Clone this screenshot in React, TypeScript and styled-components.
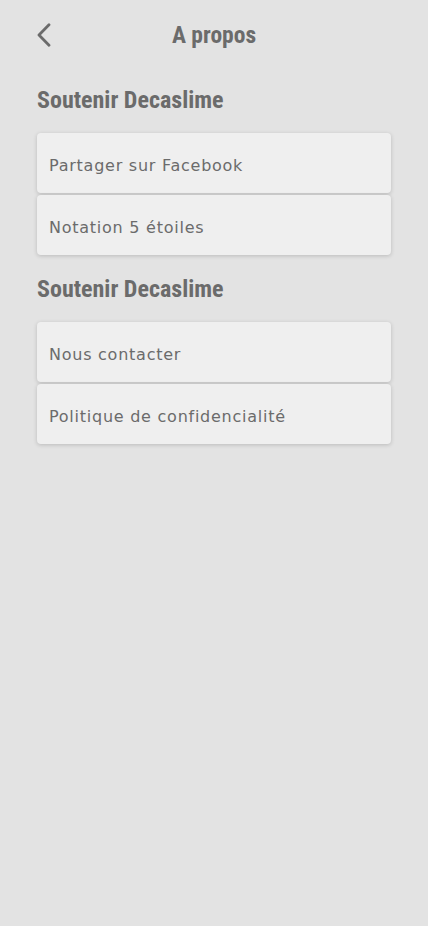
import React from "react";
import styled, { createGlobalStyle } from "styled-components";

const Global = createGlobalStyle`
  html, body { margin: 0; padding: 0; background: #e3e3e3; }
  body { font-family: "DejaVu Sans", "Open Sans", sans-serif; }
  #root { min-height: 926px; }
`;

const Page = styled.div`
  width: 428px;
  min-height: 926px;
  background: #e3e3e3;
  padding: 0 37px;
  box-sizing: border-box;
`;

const Header = styled.header`
  position: relative;
  height: 70px;
  display: flex;
  align-items: center;
  justify-content: center;
`;

const BackButton = styled.button`
  position: absolute;
  left: 0;
  top: 23px;
  width: 14px;
  height: 24px;
  padding: 0;
  border: none;
  background: transparent;
  display: flex;
  cursor: pointer;
`;

const Title = styled.h1`
  margin: 0;
  font-family: "Roboto Condensed", "Roboto", sans-serif;
  font-stretch: condensed;
  font-weight: 700;
  font-size: 23.5px;
  letter-spacing: 0;
  color: #6b6b6b;
`;

const SectionTitle = styled.h2`
  margin: 14px 0 17px;
  font-family: "Roboto Condensed", "Roboto", sans-serif;
  font-stretch: condensed;
  font-weight: 700;
  font-size: 24px;
  letter-spacing: 0;
  line-height: 32px;
  color: #6b6b6b;
`;

const List = styled.div`
  display: flex;
  flex-direction: column;
  gap: 2px;
  margin-bottom: 18px;
`;

const Item = styled.div`
  height: 60px;
  box-sizing: border-box;
  display: flex;
  align-items: center;
  padding: 5px 12px 0;
  background: #efefef;
  border-radius: 4px;
  box-shadow: 0 1px 4px rgba(0, 0, 0, 0.18);
  font-family: "DejaVu Sans", "Open Sans", sans-serif;
  font-size: 16px;
  letter-spacing: 0.75px;
  color: #6b6b6b;
`;

const sections = [
  { title: "Soutenir Decaslime", items: ["Partager sur Facebook", "Notation 5 étoiles"] },
  { title: "Soutenir Decaslime", items: ["Nous contacter", "Politique de confidencialité"] },
];

export default function App() {
  return (
    <>
      <Global />
      <Page>
        <Header>
          <BackButton aria-label="Retour">
            <svg width="14" height="24" viewBox="0 0 14 24">
              <path d="M12 1.8 L2 12 L12 22.2" fill="none" stroke="#6b6b6b" strokeWidth="2.8" strokeLinecap="round" strokeLinejoin="round" />
            </svg>
          </BackButton>
          <Title>A propos</Title>
        </Header>
        {sections.map((s, i) => (
          <section key={i}>
            <SectionTitle>{s.title}</SectionTitle>
            <List>
              {s.items.map((it) => (
                <Item key={it}>{it}</Item>
              ))}
            </List>
          </section>
        ))}
      </Page>
    </>
  );
}
